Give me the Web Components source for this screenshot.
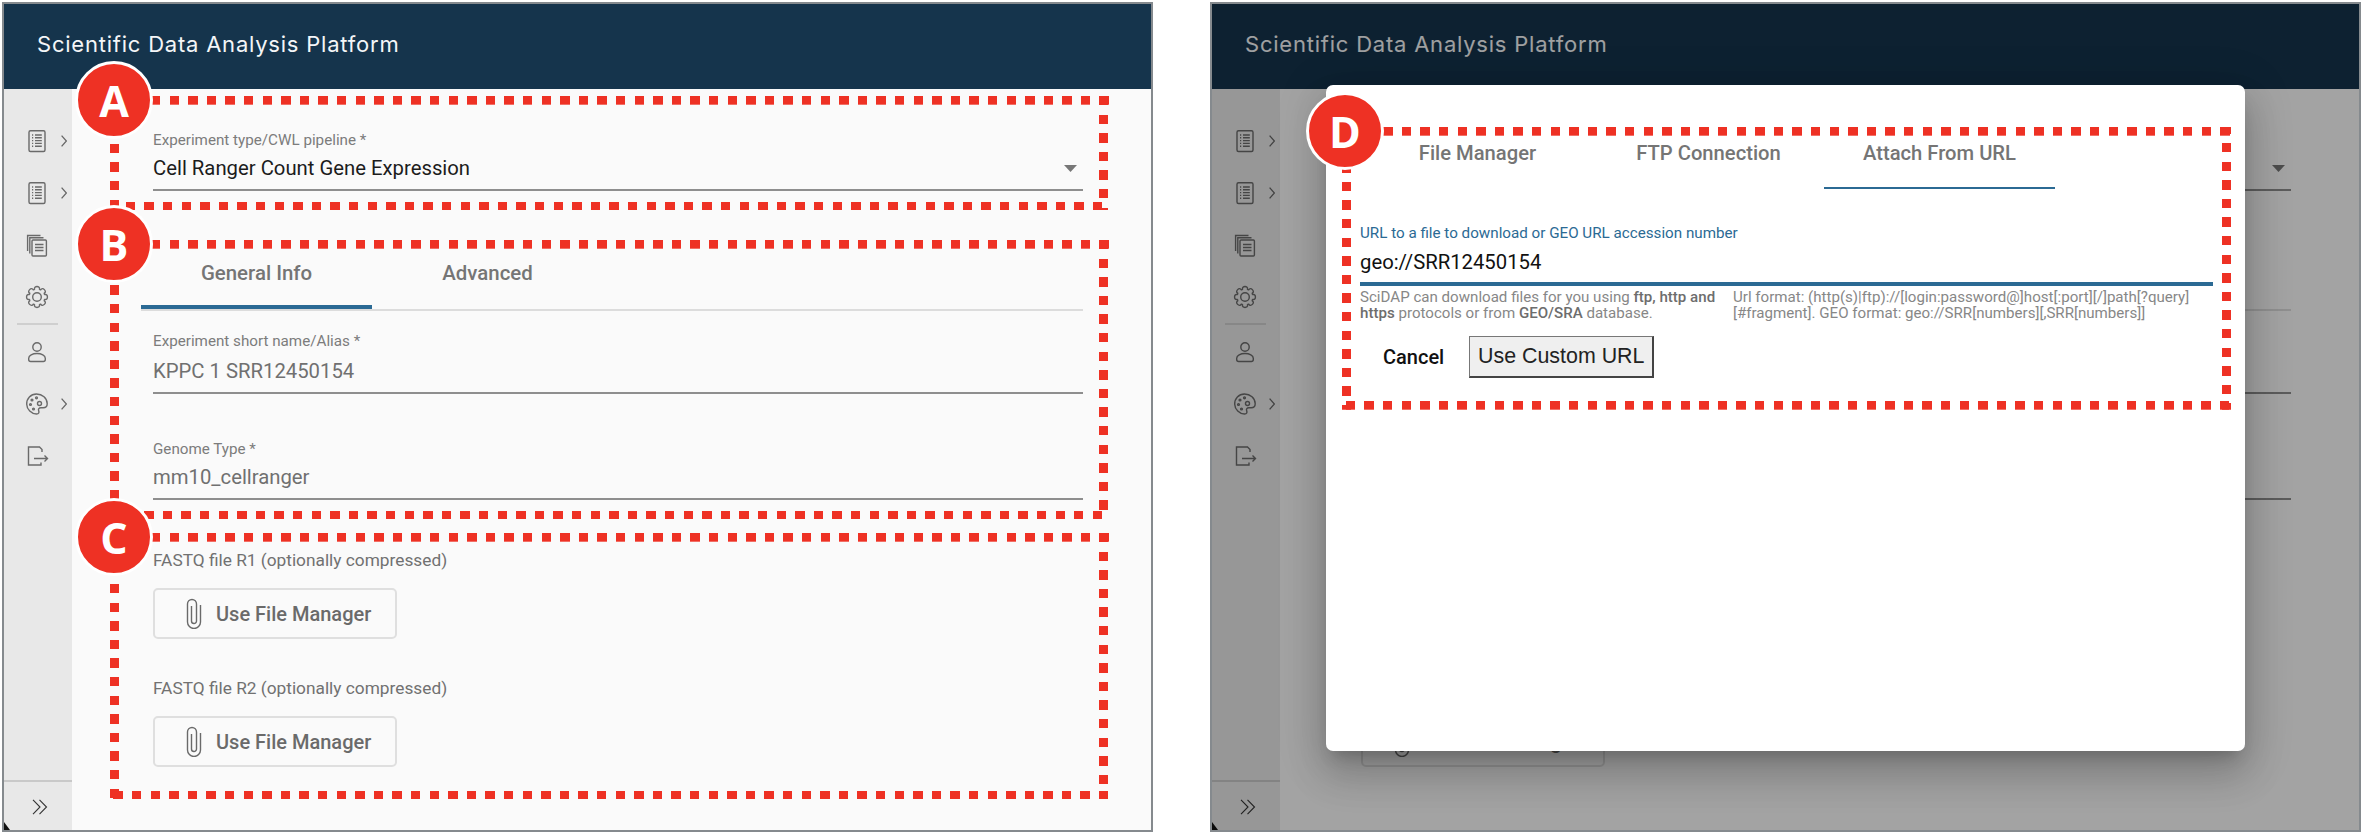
<!DOCTYPE html>
<html><head><meta charset="utf-8"><style>
html,body{margin:0;padding:0;background:#fff}
html{height:832px;overflow:hidden}
body{width:2362px;height:832px;overflow:hidden;font-family:Roboto,"Liberation Sans",sans-serif}
.page{display:flex;gap:57px;padding:2px 0 0 2px;box-sizing:border-box;height:832px}
</style></head><body>
<div class="page">
<app-shell>
  <form-panel full></form-panel>
  <marker-box slot="over" rect="105.5 92 999.2 114.2" phases="0 0 6.7 0.9"></marker-box>
  <marker-box slot="over" rect="105.5 236 999.2 279.3" phases="0 0 6.9 0.9"></marker-box>
  <marker-box slot="over" rect="105.5 529 999.2 266.3" phases="0 0 0.5 0.9"></marker-box>
  <marker-badge slot="over" x="110" y="96">A</marker-badge>
  <marker-badge slot="over" x="110" y="240">B</marker-badge>
  <marker-badge slot="over" x="110" y="533">C</marker-badge>
</app-shell>
<app-shell dim>
  <form-panel></form-panel>
  <url-dialog slot="over"></url-dialog>
  <marker-box slot="over" rect="130 123 889 282.5" phases="1.4 16.3 1.7 13.9"></marker-box>
  <marker-badge slot="over" x="133" y="127">D</marker-badge>
</app-shell>
</div>
<script>
const gear=(()=>{const n=8,c=12,P=(r,t)=>(c+r*Math.cos(t)).toFixed(2)+' '+(c+r*Math.sin(t)).toFixed(2);let p='';
 for(let i=0;i<n;i++){const a=i/n*Math.PI*2-Math.PI/2;
  p+=(i?'':'M'+P(8.2,a-.3))+'C'+P(11.9,a-.32)+' '+P(11.9,a+.32)+' '+P(8.2,a+.3)+'Q'+P(7.6,a+Math.PI/8)+' '+P(8.2,a+Math.PI/4-.3);}
 return p+'Z'})();
const ICONS={
 doc:'<rect x="4" y="1.700" width="16" height="20.800" rx="1.500"/><path d="M10 6h6.800M10 8.800h6.800M10 11.600h6.800M10 14.400h6.800M10 17.200h6.800M7 6h1.200M7 8.800h1.200M7 11.600h1.200M7 14.400h1.200M7 17.200h1.200"/>',
 files:'<path d="M4.800 20.500V4.800H18.500M2.600 18V2.500H15.500"/><rect x="7" y="7" width="14.400" height="16" rx="1"/><path d="M10 11.500h8.500M10 14.500h8.500M10 17.500h8.500"/>',
 gear:'<path stroke-linejoin="round" d="'+gear+'"/><circle cx="12" cy="12" r="4.300"/>',
 user:'<circle cx="12" cy="7" r="4.200"/><path d="M12 13.500c-4.500 0-8.300 2-8.300 4.700v1.300c0 1.100.9 2 2 2h12.600c1.100 0 2-.9 2-2v-1.300c0-2.700-3.800-4.700-8.300-4.700z"/>',
 palette:'<path d="M11.500 2C5.800 2 1.500 6.600 1.700 12.200c.2 5.300 4.600 9.800 9.800 9.800 2.400 0 2.800-1.700 2.200-3.100-.7-1.700.3-3.200 2.200-3.200h2.300c2.300 0 4-1.700 4-4C22.200 6 17.200 2 11.500 2z"/><circle cx="7" cy="8" r=".9"/><circle cx="11.500" cy="5.800" r=".9"/><circle cx="5.500" cy="12.500" r=".9"/><circle cx="8.500" cy="17" r=".9"/><circle cx="14.500" cy="11.500" r="2"/>',
 logout:'<path d="M17 8V5.500L14.500 3H3.500v18H16v-2.500"/><path d="M9 14.500h13.500M19.500 11.500l3 3-3 3"/>'
};
const svg=(name,s=24)=>`<svg width="${s}" height="${s}" viewBox="0 0 24 24" fill="none" stroke="#6a6a6a" stroke-width="1.400">${ICONS[name]}</svg>`;
const def=(n,c)=>customElements.define(n,c);
class Base extends HTMLElement{
 render(html){if(!this.shadowRoot)this.attachShadow({mode:'open'});this.shadowRoot.innerHTML=html}
}
def('nav-item',class extends Base{connectedCallback(){
 const more=this.hasAttribute('more');
 this.render(`<style>:host{display:flex;align-items:center;height:52px;padding-left:21px}
 svg{display:block;flex:none}.c{margin-left:11.500px}</style>${svg(this.getAttribute('icon'))}
 ${more?'<svg class="c" width="6" height="12" viewBox="0 0 6 12" fill="none" stroke="#666" stroke-width="1.300"><path d="M.6 .6L5.400 6 .6 11.400"/></svg>':''}`)}});
def('side-nav',class extends Base{connectedCallback(){
 this.render(`<style>:host{display:flex;flex-direction:column;width:68px;flex:none;background:#e8e8e8;box-sizing:border-box;padding-top:26px}
 hr{border:0;height:2px;width:41px;background:#cfcfcf;margin:0 0 1px 13px}
 .foot{margin-top:auto;height:50px;border-top:2px solid #c9c9c9;box-sizing:border-box;display:flex;align-items:center;padding:1px 0 0 28px}</style>
 <nav-item icon="doc" more></nav-item><nav-item icon="doc" more></nav-item><nav-item icon="files"></nav-item><nav-item icon="gear"></nav-item><hr>
 <nav-item icon="user"></nav-item><nav-item icon="palette" more></nav-item><nav-item icon="logout"></nav-item>
 <div class="foot"><svg width="16" height="16" viewBox="0 0 16 16" fill="none" stroke="#333" stroke-width="1.100"><path d="M1 .8L8 8 1 15.200M7.500 .8L14.500 8 7.500 15.200"/></svg></div>`)}});
def('app-shell',class extends Base{connectedCallback(){
 const dim=this.hasAttribute('dim');
 this.render(`<style>:host{display:flex;flex-direction:column;position:relative;width:1151px;height:830px;box-sizing:border-box;border:2px solid #858a8e;overflow:hidden;background:#fafafa}
 header{height:85px;flex:none;background:#15344c;color:#f4f6f8;font:400 22px Inter,sans-serif;letter-spacing:.78px;display:flex;align-items:center;padding:0 0 6px 33px;box-sizing:border-box}
 .body{flex:1;display:flex;min-height:0}.main{flex:1;min-width:0;padding:41px 68px 0 81px;background:#fafafa}
 .scrim{position:absolute;inset:0;background:rgba(0,0,0,.35)}
 .tri{position:absolute;left:0;bottom:0}</style>
 <header>Scientific Data Analysis Platform</header>
 <div class="body"><side-nav></side-nav><div class="main"><slot></slot></div></div>
 <svg class="tri" width="6" height="8"><path d="M0 0L6 8H0z" fill="#111"/></svg>
 ${dim?'<div class="scrim"></div>':''}<slot name="over"></slot>`)}});
def('form-field',class extends Base{connectedCallback(){
 const a=n=>this.getAttribute(n)||'';
 this.render(`<style>:host{display:block;margin-top:${a('top')||0}px}
 .l{height:20px;line-height:20px;font-size:15.200px;color:#7c7c7c;white-space:nowrap}
 .v{height:24px;line-height:24px;margin-top:${a('gap')||8}px;font-size:20.300px;color:${a('dark')!==''?'#1c1c1c':'#707070'};position:relative;white-space:nowrap}
 .u{height:2px;background:#8e8e8e;margin-top:${a('below')||9}px}
 svg{position:absolute;right:6px;top:9px}</style>
 <div class="l">${a('label')}</div><div class="v">${a('value')}${this.hasAttribute('select')?'<svg width="13" height="7"><path d="M0 0h13L6.500 7z" fill="#777"/></svg>':''}</div><div class="u"></div>`)}});
def('tab-bar',class extends Base{connectedCallback(){
 const tabs=JSON.parse(this.getAttribute('tabs')),act=+this.getAttribute('active'),thin=this.hasAttribute('thin');
 this.render(`<style>:host{display:flex;${thin?'':'border-bottom:2px solid #dcdcdc;'}box-sizing:border-box}
 .t{width:231px;box-sizing:border-box;text-align:center;font:500 ${thin?20.2:20.4}px/24px Roboto,sans-serif;color:#757575;padding:${thin?'16px 0 22px':'13px 0 20px'};white-space:nowrap;position:relative}
 .a{border-bottom:${thin?2:4}px solid #2b6a94}.n{border-bottom:${thin?2:4}px solid transparent}</style>
 ${tabs.map((t,i)=>`<div class="t ${i==act?'a':'n'}">${t}</div>`).join('')}`)}});
def('file-field',class extends Base{connectedCallback(){
 const a=n=>this.getAttribute(n)||'';
 this.render(`<style>:host{display:block;margin-top:${a('top')||0}px}
 .l{height:24px;line-height:24px;font-size:17.300px;color:#717171;white-space:nowrap}
 .b{margin-top:16px;width:244px;height:51px;box-sizing:border-box;border:2px solid #dfdfdf;border-radius:5px;display:flex;align-items:center;padding-left:31px;color:#6a6a6a;font:500 20px Roboto,sans-serif}
 svg{flex:none;margin-right:14px}</style>
 <div class="l">${a('label')}</div><div class="b"><svg width="16" height="31" viewBox="0 0 16 31" fill="none" stroke="#6a6a6a" stroke-width="1.400"><path d="M5.500 8V23a2.500 2.500 0 0 0 5 0V6a4.500 4.500 0 0 0-9 0V24a6.500 6.500 0 0 0 13 0V7"/></svg><span>${a('text')}</span></div>`)}});
def('form-panel',class extends Base{connectedCallback(){
 const f=this.hasAttribute('full');
 const t=s=>f?s:'';
 this.render(`<style>:host{display:block}tab-bar{margin:57px 0 0 -12px;height:63px}</style>
 <form-field label="${t('Experiment type/CWL pipeline *')}" value="${t('Cell Ranger Count Gene Expression')}" dark="1" select gap="6"></form-field>
 <tab-bar tabs='${JSON.stringify(f?['General Info','Advanced']:['',''])}' active="0"></tab-bar>
 <form-field top="20" label="${t('Experiment short name/Alias *')}" value="${t('KPPC 1 SRR12450154')}" gap="8" below="9"></form-field>
 <form-field top="45" label="${t('Genome Type *')}" value="${t('mm10_cellranger')}" gap="6" below="9"></form-field>
 <file-field top="48" label="${t('FASTQ file R1 (optionally compressed)')}" text="${t('Use File Manager')}"></file-field>
 <file-field top="37" label="${t('FASTQ file R2 (optionally compressed)')}" text="Use File Manager"></file-field>`)}});
def('marker-box',class extends Base{connectedCallback(){
 const [x,y,w,h]=this.getAttribute('rect').split(' ').map(Number);
 const ph=this.getAttribute('phases').split(' ').map(Number),P=18.6,D=9.4;
 const g=(dir,p)=>{const e=p+D;const s=e<=P?`transparent 0 ${p}px,#ee3124 ${p}px ${e}px,transparent ${e}px ${P}px`:`#ee3124 0 ${e-P}px,transparent ${e-P}px ${p}px,#ee3124 ${p}px ${P}px`;return `repeating-linear-gradient(${dir},${s})`};
 this.render(`<style>:host{position:absolute;left:${x}px;top:${y}px;width:${w}px;height:${h}px;
 background:${g('to left',ph[0])} top/100% 8.700px no-repeat,${g('to bottom',ph[1])} right/${D}px 100% no-repeat,${g('to left',ph[2])} bottom/100% 8.700px no-repeat,${g('to top',ph[3])} left/${D}px 100% no-repeat}</style>`)}});
def('marker-badge',class extends Base{connectedCallback(){
 const x=+this.getAttribute('x'),y=+this.getAttribute('y');
 this.render(`<style>:host{position:absolute;left:${x-39}px;top:${y-39}px;width:72px;height:72px;border:3px solid #fff;border-radius:50%;background:#ee3124;color:#fff;display:flex;align-items:center;justify-content:center;font:700 43px/1 "Open Sans",sans-serif}</style><slot></slot>`)}});
def('url-dialog',class extends Base{connectedCallback(){
 this.render(`<style>:host{position:absolute;left:114px;top:81px;width:919px;height:666px;box-sizing:border-box;background:#fff;border-radius:7px;padding:40px 32px 0 34px;
 box-shadow:0 11px 15px -7px rgba(0,0,0,.2),0 24px 38px 3px rgba(0,0,0,.14),0 9px 46px 8px rgba(0,0,0,.12)}
 tab-bar{margin-left:2px}
 .l{margin-top:34px;height:20px;line-height:20px;font-size:15.200px;color:#2b6a94;white-space:nowrap}
 .v{margin-top:7px;height:24px;line-height:24px;font-size:20.300px;color:#111;padding-bottom:8px;border-bottom:4px solid #2b6a94}
 .h{display:grid;grid-template-columns:373px 1fr;margin-top:4px;font-size:15.100px;line-height:15.500px;color:#878787;white-space:nowrap}
 b{font-weight:500;color:#6d6d6d}
 .r{display:flex;align-items:center;margin-top:15px;padding-left:23px}
 .c{font:500 20px Roboto,sans-serif;color:#111;margin-right:25px}
 .o{width:185px;height:42px;box-sizing:border-box;background:#efefef;border:1px solid #777;border-right:2px solid #444;border-bottom:2px solid #444;display:flex;align-items:center;justify-content:center;font:400 21.400px "Liberation Sans",sans-serif;color:#222}</style>
 <tab-bar thin tabs='["File Manager","FTP Connection","Attach From URL"]' active="2"></tab-bar>
 <div class="l">URL to a file to download or GEO URL accession number</div>
 <div class="v">geo://SRR12450154</div>
 <div class="h"><div>SciDAP can download files for you using <b>ftp, http and<br>https</b> protocols or from <b>GEO/SRA</b> database.</div>
 <div>Url format: (http(s)|ftp)://[login:password@]host[:port][/]path[?query]<br>[#fragment]. GEO format: geo://SRR[numbers][,SRR[numbers]]</div></div>
 <div class="r"><span class="c">Cancel</span><span class="o">Use Custom URL</span></div>`)}});
</script>
</body></html>
